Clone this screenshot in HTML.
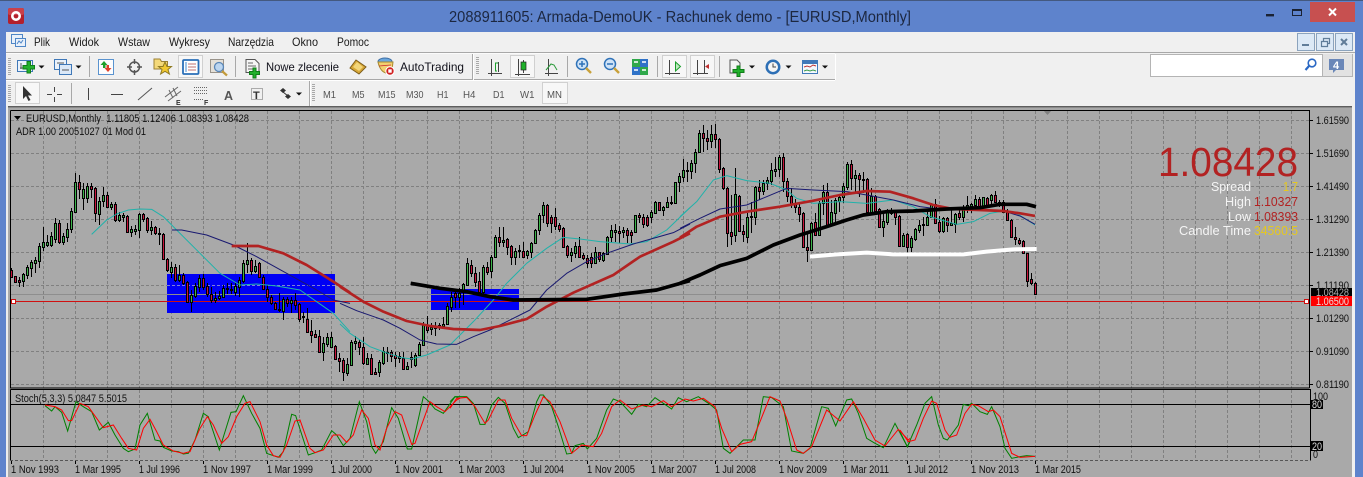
<!DOCTYPE html>
<html><head><meta charset="utf-8"><style>
html,body{margin:0;padding:0;width:1363px;height:477px;overflow:hidden;background:#a9a9a9}
svg{display:block}
text{font-family:"Liberation Sans",sans-serif;white-space:pre}
.m{font-size:12px;fill:#1a1a1a}
.p{font-size:10.500px;fill:#555}
.c{font-size:11px;fill:#111}
.a{font-size:11px;fill:#111}
.t{font-size:11px;fill:#111}
</style></head><body>
<svg id="s" width="1363" height="477" viewBox="0 0 1363 477" xmlns="http://www.w3.org/2000/svg">
<!-- window -->
<rect width="1363" height="477" fill="#5e83cc"/>
<rect width="1363" height="1" fill="#44597f"/>
<rect x="6" y="32" width="1349" height="445" fill="#f0f0f0"/>
<!-- app icon -->
<rect x="8" y="8" width="16" height="16" rx="2" fill="#b3202c"/>
<rect x="8" y="8" width="16" height="7" rx="2" fill="#c9404a"/>
<circle cx="16" cy="16" r="3.700" fill="none" stroke="#fff" stroke-width="2.600"/>
<text x="449" y="22" font-size="15.500" fill="#1c2740" textLength="462" lengthAdjust="spacingAndGlyphs">2088911605: Armada-DemoUK - Rachunek demo - [EURUSD,Monthly]</text>
<!-- window buttons -->
<rect x="1266" y="14" width="8" height="2.400" fill="#1a2233"/>
<rect x="1292.500" y="9.500" width="9" height="6" fill="none" stroke="#1a2233"/><rect x="1292" y="9" width="10" height="2" fill="#1a2233"/>
<rect x="1310" y="2" width="45" height="20" fill="#c75050"/>
<path d="M1329 8.500l7 7M1336 8.500l-7 7" stroke="#fff" stroke-width="2"/>
<!-- menu -->
<rect x="11.500" y="34.500" width="11" height="9" fill="#e8f0fa" stroke="#4f86c6"/>
<rect x="15.500" y="38.500" width="10" height="8" fill="#e8f0fa" stroke="#4f86c6"/>
<path d="M17 44l2-3 2 2 2-3" stroke="#4f86c6" fill="none"/>
<text class="m" x="34" y="46" textLength="16" lengthAdjust="spacingAndGlyphs">Plik</text>
<text class="m" x="69" y="46" textLength="30" lengthAdjust="spacingAndGlyphs">Widok</text>
<text class="m" x="118" y="46" textLength="32" lengthAdjust="spacingAndGlyphs">Wstaw</text>
<text class="m" x="169" y="46" textLength="41" lengthAdjust="spacingAndGlyphs">Wykresy</text>
<text class="m" x="228" y="46" textLength="46" lengthAdjust="spacingAndGlyphs">Narzędzia</text>
<text class="m" x="292" y="46" textLength="26" lengthAdjust="spacingAndGlyphs">Okno</text>
<text class="m" x="337" y="46" textLength="32" lengthAdjust="spacingAndGlyphs">Pomoc</text>
<!-- mdi buttons -->
<g fill="#dce9f6" stroke="#8ba3bd"><rect x="1297.500" y="33.500" width="17" height="17"/><rect x="1316.500" y="33.500" width="17" height="17"/><rect x="1335.500" y="33.500" width="17" height="17"/></g>
<rect x="1302" y="44" width="7" height="2" fill="#607d99"/>
<path d="M1321.500 41.500h6v5h-6zM1323.500 41v-2.500h6v5h-2" fill="none" stroke="#607d99" stroke-width="1.200"/>
<path d="M1341 39l6 6M1347 39l-6 6" stroke="#607d99" stroke-width="2"/>
<!-- toolbar lines -->
<rect x="6" y="52" width="1349" height="1" fill="#a8a8a8"/>
<rect x="6" y="53" width="829" height="1" fill="#fbfbfb"/>
<rect x="6" y="79" width="829" height="1" fill="#a8a8a8"/>
<rect x="6" y="80" width="829" height="1" fill="#fff"/>
<rect x="835" y="54" width="1" height="26" fill="#fff"/>
<rect x="472" y="54" width="1" height="26" fill="#a8a8a8"/>
<rect x="473" y="54" width="1" height="26" fill="#fff"/>
<g fill="#a8a8a8"><rect x="8" y="58" width="3" height="1"/><rect x="8" y="60" width="3" height="1"/><rect x="8" y="62" width="3" height="1"/><rect x="8" y="64" width="3" height="1"/><rect x="8" y="66" width="3" height="1"/><rect x="8" y="68" width="3" height="1"/><rect x="8" y="70" width="3" height="1"/><rect x="8" y="72" width="3" height="1"/><rect x="8" y="74" width="3" height="1"/>
<rect x="476" y="57" width="3" height="1"/><rect x="476" y="59" width="3" height="1"/><rect x="476" y="61" width="3" height="1"/><rect x="476" y="63" width="3" height="1"/><rect x="476" y="65" width="3" height="1"/><rect x="476" y="67" width="3" height="1"/><rect x="476" y="69" width="3" height="1"/><rect x="476" y="71" width="3" height="1"/><rect x="476" y="73" width="3" height="1"/>
<rect x="8" y="85" width="3" height="1"/><rect x="8" y="87" width="3" height="1"/><rect x="8" y="89" width="3" height="1"/><rect x="8" y="91" width="3" height="1"/><rect x="8" y="93" width="3" height="1"/><rect x="8" y="95" width="3" height="1"/><rect x="8" y="97" width="3" height="1"/><rect x="8" y="99" width="3" height="1"/><rect x="8" y="101" width="3" height="1"/>
<rect x="312" y="84" width="3" height="1"/><rect x="312" y="86" width="3" height="1"/><rect x="312" y="88" width="3" height="1"/><rect x="312" y="90" width="3" height="1"/><rect x="312" y="92" width="3" height="1"/><rect x="312" y="94" width="3" height="1"/><rect x="312" y="96" width="3" height="1"/><rect x="312" y="98" width="3" height="1"/><rect x="312" y="100" width="3" height="1"/>
<rect x="89" y="56" width="1" height="21"/><rect x="235" y="56" width="1" height="21"/><rect x="567" y="56" width="1" height="21"/><rect x="657" y="56" width="1" height="21"/><rect x="719" y="56" width="1" height="21"/>
<rect x="71" y="83" width="1" height="21"/><rect x="309" y="81" width="1" height="25"/></g>
<rect x="310" y="81" width="1" height="25" fill="#fff"/>
<!-- selected buttons -->
<g fill="#f7f7f7" stroke="#d0d0d0"><rect x="178.500" y="55.500" width="24" height="22"/><rect x="510.500" y="55.500" width="24" height="22"/><rect x="662.500" y="55.500" width="24" height="22"/><rect x="690.500" y="55.500" width="24" height="22"/><rect x="15.500" y="82.500" width="24" height="21"/><rect x="542.500" y="82.500" width="25" height="21"/></g>
<!-- tb1 icons -->
<rect x="17.500" y="60.500" width="15" height="11" fill="#eaf2fb" stroke="#3f78b8"/><path d="M21 63v6M20 68h9M24 66h4" stroke="#555" fill="none"/>
<path d="M27 61.500h3.500v4h4v3.500h-4v4H27v-4h-4v-3.500h4z" fill="#22b02c" stroke="#0f7d18"/>
<path d="M38.500 65.500h6l-3 3z" fill="#111"/>
<rect x="54.500" y="59.500" width="12" height="10" fill="#eaf2fb" stroke="#3f78b8"/><rect x="59.500" y="64.500" width="12" height="10" fill="#dbe8f7" stroke="#3f78b8"/><path d="M57 63h7M62 70h7" stroke="#555"/>
<path d="M75.500 65.500h6l-3 3z" fill="#111"/>
<rect x="98.500" y="59.500" width="15" height="15" fill="#fdfdfd" stroke="#5a93cf"/>
<path d="M104 61l-3.500 4H103v3h2.500v-3h2z" fill="#1fa02a"/><path d="M108 72l3.500-4H109v-3h-2.500v3h-2z" fill="#e0402a"/>
<circle cx="134.500" cy="67" r="5" fill="none" stroke="#555" stroke-width="1.500"/><path d="M134.500 59v5M134.500 70v5M127 67h5M137 67h5" stroke="#555" stroke-width="1.500"/>
<path d="M154 59h6l1.500 2.500h6V69h-13.500z" fill="#f4d97a" stroke="#9c8133"/>
<path d="M165 62l2 4.500h4.500l-3.500 3 1.400 4.500-4.400-2.700-4.400 2.700 1.400-4.500-3.500-3h4.500z" fill="#f2c830" stroke="#8f7a22"/>
<rect x="183" y="60" width="15.500" height="14" rx="1" fill="#fff" stroke="#2a6fb8" stroke-width="1.800"/><path d="M186 62v10" stroke="#7fb0e0" stroke-width="1.500"/><path d="M188 64h8M188 67h8M188 70h8" stroke="#c07070"/>
<rect x="210.500" y="59.500" width="13" height="13" fill="#e4e0d8" stroke="#99938a"/><circle cx="219" cy="67" r="4.500" fill="#bcd6f0" stroke="#5a87b8" stroke-width="1.300"/><path d="M222 71l5 4.500" stroke="#c29a3a" stroke-width="2.200"/>
<path d="M246 59.500h9l4 4v9h-13z" fill="#f5f5f5" stroke="#555"/><path d="M248 63h5M248 66h8M248 69h5" stroke="#666"/>
<path d="M253 68h3v3.500h3.500v3H256v3.500h-3v-3.500h-3.500v-3h3.500z" fill="#22b02c" stroke="#0f7d18"/>
<text x="266" y="71" font-size="12" fill="#10101a" textLength="73" lengthAdjust="spacingAndGlyphs">Nowe zlecenie</text>
<path d="M350 68l6-8 10 7-7 7z" fill="#d8a838" stroke="#7d5d1a"/><path d="M353 67l4-5 6 5-4 4z" fill="#f3d67a"/>
<ellipse cx="385" cy="61.500" rx="7" ry="3.500" fill="#6aa6dd" stroke="#3f6fa5"/>
<path d="M378 62c1 5 4 11 9 11s5-3 6-11z" fill="#f2d070" stroke="#a88a2f"/><path d="M379 66l12-1" stroke="#c33" stroke-width=".8"/>
<circle cx="390" cy="71" r="4.200" fill="#d02020" stroke="#fff"/><rect x="388.300" y="69.300" width="3.400" height="3.400" fill="#fff"/>
<text x="400" y="71" font-size="12" fill="#10101a" textLength="64" lengthAdjust="spacingAndGlyphs">AutoTrading</text>
<!-- chart type -->
<g fill="none" stroke="#444"><path d="M488 73.500h14M491.500 59v17"/></g><path d="M495.500 71v-8h2.500M495 71h2" stroke="#1a9e2a" fill="none"/><path d="M498.500 62v10" stroke="#444"/>
<g fill="none" stroke="#444"><path d="M515 74.500h15M518.500 59v17M523.500 60v13"/></g><rect x="521" y="62" width="5" height="8" fill="#1fb02a" stroke="#222" stroke-width=".7"/>
<path d="M545 73.500h13M548.500 59v17" stroke="#444" fill="none"/><path d="M546 70l5-6 3 1 3 5" stroke="#2a9a3a" fill="none"/>
<!-- zoom -->
<circle cx="582" cy="64" r="5.500" fill="#cfe3f7" stroke="#2f72b8" stroke-width="1.500"/><path d="M579 64h6M582 61v6" stroke="#2f72b8" stroke-width="1.500"/><path d="M586 68l5 5" stroke="#c9a13a" stroke-width="2.400"/>
<circle cx="610" cy="64" r="5.500" fill="#cfe3f7" stroke="#2f72b8" stroke-width="1.500"/><path d="M607 64h6" stroke="#2f72b8" stroke-width="1.500"/><path d="M614 68l5 5" stroke="#c9a13a" stroke-width="2.400"/>
<rect x="632" y="59" width="8" height="8" fill="#2fa84a"/><rect x="640" y="59" width="8" height="8" fill="#2f72c8"/><rect x="632" y="67" width="8" height="8" fill="#2f72c8"/><rect x="640" y="67" width="8" height="8" fill="#2fa84a"/>
<path d="M634 62h4M642 62h4M634 70h4M642 70h4" stroke="#fff" stroke-width="1.500"/>
<!-- scroll -->
<path d="M669.500 60v15M665 73.500h15" stroke="#444" fill="none"/><path d="M675.500 62l5 4.500-5 4.500z" fill="#bfe8c0" stroke="#1a9e2a"/>
<path d="M697.500 60v15M693 73.500h15M704.500 60v13" stroke="#444" fill="none"/><path d="M705 66.500l4-2.500v5z" fill="#c03030"/>
<!-- others -->
<path d="M730 60h7l3 3v10h-10z" fill="#f5f5f5" stroke="#555"/><path d="M737 66h3v3.500h4v3h-4v4h-3v-4h-4v-3h4z" fill="#22b02c" stroke="#0f7d18"/>
<path d="M749 65.500h6l-3 3z" fill="#111"/>
<circle cx="773" cy="67" r="7.500" fill="#2d6fb5"/><circle cx="773" cy="67" r="5" fill="#f4f4f4"/><path d="M773 63.500V67h3" stroke="#444" fill="none"/>
<path d="M785.500 65.500h6l-3 3z" fill="#111"/>
<rect x="802.500" y="60.500" width="15" height="13" fill="#f4f8fd" stroke="#3f78b8"/><rect x="803" y="61" width="14" height="3" fill="#3f78b8"/><path d="M804 67l3-1 3 1 3-2 3 1" stroke="#b33" fill="none"/><path d="M804 71l3-1 3 1 3-1 3 1" stroke="#3a9a4a" fill="none"/>
<path d="M822 65.500h6l-3 3z" fill="#111"/>
<!-- search -->
<rect x="1150.500" y="54.500" width="172" height="22" fill="#fff" stroke="#b4b4b4"/>
<circle cx="1312" cy="63" r="3.800" fill="none" stroke="#2a68c4" stroke-width="1.600"/><path d="M1309 66l-3.500 4" stroke="#2a68c4" stroke-width="2.200"/>
<rect x="1323" y="54" width="30" height="23" fill="#e2e2e2"/><rect x="1352" y="54" width="1" height="23" fill="#b4b4b4"/><rect x="1323" y="76" width="30" height="1" fill="#b4b4b4"/>
<path d="M1329 59h15v11h-8l-3 3v-3h-4z" fill="#6a87b8"/>
<text x="1333" y="69" font-size="11" font-weight="bold" fill="#fff">4</text>
<!-- tb2 icons -->
<path d="M23 86v13l3-3 2.500 5 2-1-2.500-4.500h4z" fill="#333"/>
<path d="M54.500 87v5M54.500 97v5M47 94.500h5M57 94.500h5" stroke="#444"/>
<path d="M88.500 88v12" stroke="#444"/>
<path d="M111 94.500h12" stroke="#444"/>
<path d="M138 100l14-12" stroke="#555"/>
<path d="M165 97l13-10M168 101l13-10M169 90l4 8M173 88l4 8" stroke="#666" fill="none"/>
<text x="176" y="105" font-size="7" font-weight="bold" fill="#333">E</text>
<path d="M194 87.500h13M194 90.500h13M194 93.500h13M194 99.500h10" stroke="#666" stroke-dasharray="1 1"/>
<text x="204" y="105" font-size="7" font-weight="bold" fill="#333">F</text>
<text x="224" y="100" font-size="12.500" font-weight="bold" fill="#555">A</text>
<rect x="251.500" y="88.500" width="11" height="11" fill="none" stroke="#666" stroke-dasharray="1 1"/>
<text x="253" y="99" font-size="11" font-weight="bold" fill="#333">T</text>
<path d="M283 88l-3 2.500 3 2.500 3-2.500zM288 94l-3 2.500 3 2.500 3-2.500z" fill="#333"/><path d="M283 92l5 4" stroke="#333"/>
<path d="M296 92.500h6l-3 3z" fill="#111"/>
<text class="p" x="323" y="98" textLength="13" lengthAdjust="spacingAndGlyphs">M1</text>
<text class="p" x="352" y="98" textLength="12.500" lengthAdjust="spacingAndGlyphs">M5</text>
<text class="p" x="378" y="98" textLength="17.500" lengthAdjust="spacingAndGlyphs">M15</text>
<text class="p" x="406" y="98" textLength="17.500" lengthAdjust="spacingAndGlyphs">M30</text>
<text class="p" x="437" y="98" textLength="11.500" lengthAdjust="spacingAndGlyphs">H1</text>
<text class="p" x="463" y="98" textLength="12.500" lengthAdjust="spacingAndGlyphs">H4</text>
<text class="p" x="493" y="98" textLength="11.500" lengthAdjust="spacingAndGlyphs">D1</text>
<text class="p" x="520" y="98" textLength="14.500" lengthAdjust="spacingAndGlyphs">W1</text>
<text class="p" x="547" y="98" textLength="15" lengthAdjust="spacingAndGlyphs">MN</text>
<!-- chart area -->
<rect x="6" y="106" width="1349" height="371" fill="#a9a9a9"/>
<rect x="6" y="106" width="1347" height="1" fill="#5e5e5e"/>
<rect x="6" y="107" width="1347" height="1" fill="#8a8a8a"/>
<rect x="6" y="106" width="2" height="371" fill="#ececec"/>
<rect x="1352" y="106" width="3" height="371" fill="#f0f0f0"/>
<g id="grid" shape-rendering="crispEdges"></g>
<rect x="167" y="274" width="168" height="39" fill="#0000f5"/>
<rect x="431" y="289" width="88" height="21" fill="#0000f5"/>
<path d="M167 285.500h168" stroke="#8080d8" stroke-dasharray="3 2" shape-rendering="crispEdges"/>
<path d="M11 294.500H1309" stroke="#8e8e8e" shape-rendering="crispEdges"/>
<path d="M11 301.500H1309" stroke="#d01010" shape-rendering="crispEdges"/>
<rect x="11.500" y="299.500" width="4" height="4" fill="#fff" stroke="#d01010" shape-rendering="crispEdges"/>
<rect x="1304.500" y="299.500" width="4" height="4" fill="#fff" stroke="#d01010" shape-rendering="crispEdges"/>
<path d="M1043 110h9l-4.500 5z" fill="#808080"/>
<g id="candles" shape-rendering="crispEdges"></g>
<!-- MAs -->
<g fill="none" stroke-linejoin="round">
<g stroke="#20b2aa" stroke-width="3">
<polyline transform="translate(0,120) scale(.33333)" points="275,343 320,300 350,282 385,270 420,267 455,268 490,290 530,330 600,400 660,460 720,495 770,492 830,498 900,510 950,545 1000,580 1050,635"/>
<polyline transform="translate(340,120) scale(.33333)" points="0,612 30,640 90,680 130,695 180,712 215,717 260,705 330,675 400,605 460,540 500,490 560,430 620,385 670,352 720,357 780,365 870,372 920,365 980,330 1050,263"/>
<polyline transform="translate(680,110) scale(.33333)" points="0,320 50,275 100,210 140,197 200,212 270,220 320,240 350,265 400,280 480,275 560,280 640,270 700,290 750,320 830,343 880,335 930,310 970,303 1010,310 1065,345"/>
</g>
<g stroke="#191970" stroke-width="3">
<polyline transform="translate(0,120) scale(.33333)" points="515,330 545,330 620,345 700,375 770,410 860,460 950,510 1000,540 1050,550"/>
<polyline transform="translate(340,120) scale(.33333)" points="0,550 50,572 130,600 180,625 240,660 290,672 350,673 400,650 450,630 520,595 570,570 620,510 680,460 740,425 800,400 880,372 950,352 1000,338 1050,312"/>
<polyline transform="translate(680,110) scale(.33333)" points="0,355 60,325 120,297 200,285 260,260 320,235 400,240 500,245 560,255 640,270 720,290 800,300 900,300 970,303 1020,318 1065,343"/>
</g>
<g stroke="#b22222" stroke-width="8">
<polyline transform="translate(0,120) scale(.33333)" points="695,378 775,378 850,400 920,435 1000,485 1050,518"/>
<polyline transform="translate(340,120) scale(.33333)" points="0,500 70,545 130,575 200,603 270,618 340,627 420,630 480,618 560,597 620,560 700,518 820,465 900,410 1000,365 1050,340"/>
<polyline transform="translate(680,110) scale(.33333)" points="0,383 50,350 120,320 200,305 300,290 400,272 480,255 560,243 630,245 700,265 760,285 820,297 900,300 970,303 1020,310 1065,318"/>
</g>
<g stroke="#000" stroke-width="11">
<polyline transform="translate(340,120) scale(.33333)" points="212,490 300,505 380,515 450,530 520,540 740,538 850,522 950,510 1050,482"/>
<polyline transform="translate(680,110) scale(.33333)" points="0,520 60,495 120,467 200,445 280,405 360,375 440,350 500,330 550,315 620,305 700,303 800,297 900,293 960,283 1040,283 1068,290"/>
</g>
<polyline stroke="#fff" stroke-width="12" transform="translate(680,110) scale(.33333)" points="390,440 470,433 560,428 640,433 850,433 920,425 1000,418 1070,417"/>
</g>
<!-- frames -->
<g shape-rendering="crispEdges" fill="none" stroke="#000">
<path d="M10.500 110.500H1309.500V388M10.500 110.500V388H1309.500"/>
<path d="M10.500 389.500H1310.500V460.500M10.500 389.500V460.500"/>
<path d="M10 460.500H1310" stroke="#555" stroke-dasharray="3 2"/>
<path d="M11 404.500H1310M11 446.500H1310"/>
<path d="M11.500 461v3M75.500 461v3M139.500 461v3M203.500 461v3M267.500 461v3M331.500 461v3M395.500 461v3M459.500 461v3M523.500 461v3M587.500 461v3M651.500 461v3M715.500 461v3M779.500 461v3M843.500 461v3M907.500 461v3M971.500 461v3M1035.500 461v3"/>
<path d="M1310 120.500h3M1310 153.500h3M1310 186.500h3M1310 219.500h3M1310 252.500h3M1310 285.500h3M1310 318.500h3M1310 351.500h3M1310 384.500h3"/>
</g>
<!-- stoch -->
<g fill="none" stroke-width="3">
<g stroke="#008000">
<polyline transform="translate(0,385) scale(.33333)" points="135,62 155,78 165,65 185,82 203,138 228,50 250,65 275,80 298,135 325,112 345,150 370,190 385,200 405,192 420,120 442,85 465,165 480,168 490,187 515,198 535,200 550,207 565,205 585,165 610,85 625,95 658,195 693,82 708,80 730,32 755,85 780,130 800,205 835,217 850,200 875,88 887,92 925,210 945,203 965,195 995,137 1010,150 1030,182 1050,160 1078,50 1100,110 1115,185 1127,205 1150,170 1175,68 1195,100 1222,192 1235,192 1270,35 1285,48 1305,72 1330,85 1365,35 1380,40"/>
<polyline transform="translate(450,385) scale(.33333)" points="0,50 15,35 50,35 70,55 90,118 105,118 125,60 145,37 165,55 190,130 205,158 235,140 260,50 270,30 280,30 305,65 325,125 350,207 365,205 375,182 400,175 412,192 440,160 470,75 490,42 510,50 545,88 565,58 590,65 615,38 640,55 665,72 685,38 710,50 745,35 780,58 800,75 820,190 840,205 880,165 915,165 940,35 965,38 1000,65 1025,198 1060,205 1080,190 1115,65 1135,70 1157,123 1190,45 1205,42 1225,85 1250,160 1275,175 1300,188 1335,115 1372,185 1380,170"/>
<polyline transform="translate(900,385) scale(.33333)" points="0,140 22,185 50,120 75,55 95,35 115,120 130,160 142,165 175,120 190,58 205,62 215,55 240,80 262,88 275,65 300,125 315,190 335,220 360,215 380,212 405,214"/>
</g>
<g stroke="#ff0000">
<polyline transform="translate(0,385) scale(.33333)" points="135,60 165,65 185,75 205,107 215,107 240,55 265,65 290,100 310,128 340,120 365,160 385,190 410,195 430,130 450,103 470,140 490,180 520,198 550,205 570,200 600,130 622,95 640,120 665,175 685,155 710,95 735,55 750,50 780,110 800,180 820,212 840,217 860,180 885,108 900,105 930,190 945,203 970,195 1000,150 1020,150 1040,172 1060,150 1085,75 1105,100 1125,180 1140,195 1160,130 1185,80 1205,90 1235,178 1245,175 1290,50 1310,65 1335,80 1350,65 1370,45 1380,40"/>
<polyline transform="translate(450,385) scale(.33333)" points="0,70 20,40 50,37 75,65 105,115 115,105 145,45 165,45 185,100 215,152 230,152 255,90 280,35 300,50 330,110 365,205 395,180 430,185 455,145 485,65 510,45 545,72 580,60 605,65 640,47 665,65 705,42 730,48 760,40 795,65 815,130 845,200 870,178 905,170 930,110 960,35 990,48 1010,100 1040,195 1060,205 1085,185 1130,75 1170,108 1210,50 1240,100 1275,165 1305,183 1345,133 1375,165 1380,160"/>
<polyline transform="translate(900,385) scale(.33333)" points="0,135 25,170 45,165 70,100 95,48 110,55 135,135 150,157 170,150 195,85 215,58 235,62 265,80 280,75 300,95 335,205 360,217 405,214"/>
</g>
</g>
<!-- chart texts -->
<path d="M14 116h7l-3.500 4z" fill="#000"/>
<text class="c" x="26" y="122" textLength="223" lengthAdjust="spacingAndGlyphs">EURUSD,Monthly  1.11805 1.12406 1.08393 1.08428</text>
<text class="c" x="16" y="135" textLength="130" lengthAdjust="spacingAndGlyphs">ADR 1.00 20051027 01 Mod 01</text>
<text class="c" x="15" y="402" textLength="112" lengthAdjust="spacingAndGlyphs">Stoch(5,3,3) 5.0847 5.5015</text>
<text x="1158" y="176" font-size="41" fill="#b22222" textLength="140" lengthAdjust="spacingAndGlyphs">1.08428</text>
<g font-size="13">
<text x="1211" y="191" fill="#f5f5f5" textLength="40" lengthAdjust="spacingAndGlyphs">Spread</text>
<text x="1283" y="191" fill="#e6c81e" textLength="15" lengthAdjust="spacingAndGlyphs">1.7</text>
<text x="1225" y="206" fill="#f5f5f5" textLength="26" lengthAdjust="spacingAndGlyphs">High</text>
<text x="1254" y="206" fill="#b22222" textLength="44" lengthAdjust="spacingAndGlyphs">1.10327</text>
<text x="1228" y="221" fill="#f5f5f5" textLength="23" lengthAdjust="spacingAndGlyphs">Low</text>
<text x="1254" y="221" fill="#b22222" textLength="44" lengthAdjust="spacingAndGlyphs">1.08393</text>
<text x="1179" y="235" fill="#f5f5f5" textLength="72" lengthAdjust="spacingAndGlyphs">Candle Time</text>
<text x="1254" y="235" fill="#e6c81e" textLength="44" lengthAdjust="spacingAndGlyphs">34560:5</text>
</g>
<!-- price axis -->
<text class="a" x="1316" y="124" textLength="33" lengthAdjust="spacingAndGlyphs">1.61590</text>
<text class="a" x="1316" y="157" textLength="33" lengthAdjust="spacingAndGlyphs">1.51690</text>
<text class="a" x="1316" y="190" textLength="33" lengthAdjust="spacingAndGlyphs">1.41490</text>
<text class="a" x="1316" y="223" textLength="33" lengthAdjust="spacingAndGlyphs">1.31290</text>
<text class="a" x="1316" y="256" textLength="33" lengthAdjust="spacingAndGlyphs">1.21390</text>
<text class="a" x="1316" y="289" textLength="33" lengthAdjust="spacingAndGlyphs">1.11190</text>
<text class="a" x="1316" y="322" textLength="33" lengthAdjust="spacingAndGlyphs">1.01290</text>
<text class="a" x="1316" y="355" textLength="33" lengthAdjust="spacingAndGlyphs">0.91090</text>
<text class="a" x="1316" y="388" textLength="33" lengthAdjust="spacingAndGlyphs">0.81190</text>
<rect x="1311" y="288" width="41" height="9" fill="#000"/>
<text x="1316" y="296" font-size="11" fill="#b0b0b0" textLength="33" lengthAdjust="spacingAndGlyphs">1.08428</text>
<rect x="1311" y="296" width="41" height="10" fill="#ff0000"/>
<text x="1316" y="305" font-size="11" fill="#f0d8d8" textLength="33" lengthAdjust="spacingAndGlyphs">1.06500</text>
<text class="a" x="1313" y="400" textLength="15" lengthAdjust="spacingAndGlyphs">100</text>
<rect x="1311" y="400" width="12" height="9" fill="#000"/><text x="1312" y="408" font-size="11" fill="#ddd" textLength="10" lengthAdjust="spacingAndGlyphs">80</text>
<rect x="1311" y="441" width="12" height="10" fill="#000"/><text x="1312" y="450" font-size="11" fill="#ddd" textLength="10" lengthAdjust="spacingAndGlyphs">20</text>
<text class="a" x="1313" y="458" textLength="5" lengthAdjust="spacingAndGlyphs">0</text>
<!-- time axis -->
<text class="t" x="11" y="473" textLength="48" lengthAdjust="spacingAndGlyphs">1 Nov 1993</text>
<text class="t" x="75" y="473" textLength="46" lengthAdjust="spacingAndGlyphs">1 Mar 1995</text>
<text class="t" x="139" y="473" textLength="41" lengthAdjust="spacingAndGlyphs">1 Jul 1996</text>
<text class="t" x="203" y="473" textLength="48" lengthAdjust="spacingAndGlyphs">1 Nov 1997</text>
<text class="t" x="267" y="473" textLength="46" lengthAdjust="spacingAndGlyphs">1 Mar 1999</text>
<text class="t" x="331" y="473" textLength="41" lengthAdjust="spacingAndGlyphs">1 Jul 2000</text>
<text class="t" x="395" y="473" textLength="48" lengthAdjust="spacingAndGlyphs">1 Nov 2001</text>
<text class="t" x="459" y="473" textLength="46" lengthAdjust="spacingAndGlyphs">1 Mar 2003</text>
<text class="t" x="523" y="473" textLength="41" lengthAdjust="spacingAndGlyphs">1 Jul 2004</text>
<text class="t" x="587" y="473" textLength="48" lengthAdjust="spacingAndGlyphs">1 Nov 2005</text>
<text class="t" x="651" y="473" textLength="46" lengthAdjust="spacingAndGlyphs">1 Mar 2007</text>
<text class="t" x="715" y="473" textLength="41" lengthAdjust="spacingAndGlyphs">1 Jul 2008</text>
<text class="t" x="779" y="473" textLength="48" lengthAdjust="spacingAndGlyphs">1 Nov 2009</text>
<text class="t" x="843" y="473" textLength="46" lengthAdjust="spacingAndGlyphs">1 Mar 2011</text>
<text class="t" x="907" y="473" textLength="41" lengthAdjust="spacingAndGlyphs">1 Jul 2012</text>
<text class="t" x="971" y="473" textLength="48" lengthAdjust="spacingAndGlyphs">1 Nov 2013</text>
<text class="t" x="1035" y="473" textLength="46" lengthAdjust="spacingAndGlyphs">1 Mar 2015</text>
</svg>
<script>
(function(){
var NS="http://www.w3.org/2000/svg";
function P(parent,d,stroke,w,dash){var e=document.createElementNS(NS,"path");e.setAttribute("d",d);e.setAttribute("stroke",stroke);e.setAttribute("stroke-width",w);e.setAttribute("fill","none");if(dash)e.setAttribute("stroke-dasharray",dash);parent.appendChild(e);}
var g=document.getElementById("grid"),d="",x;
for(x=43;x<1309;x+=32){d+="M"+(x+.5)+" 111V388M"+(x+.5)+" 390V460";}
[120,153,186,219,252,285,318,351,384].forEach(function(y){d+="M11 "+(y+.5)+"H1309";});
P(g,d,"#808080",1,"3 2");
var A="450 470 445 475 r,468 485 468 485 r,481 485 470 500 r,462 482 460 500 g,442 465 435 478 g,427 443 420 470 g,420 428 412 460 g,378 422 370 445 g,367 380 322 392 g,366 374 345 380 g,348 375 335 380 g,310 356 295 370 g,310 366 300 372 r,348 365 340 375 g,328 350 310 365 g,273 328 265 340 g,186 275 160 280 g,186 206 165 236 r,207 233 190 270 g,198 233 190 250 g,198 206 190 235 r,205 280 200 305 r,243 282 230 315 g,226 243 200 260 g,226 262 215 265 r,252 262 245 270 g,252 300 245 305 r,285 300 275 305 g,285 290 278 305 g,289 335 285 340 r,327 335 318 350 g,326 333 315 345 g,282 330 278 355 g,283 296 278 305 r,295 330 290 340 r,322 330 302 345 g,322 340 318 345 r,340 343 325 375 g,342 416 338 420 r,418 450 415 455 r,442 456 425 475 g,442 480 432 485 r,464 480 435 485 g,464 488 460 495 r,487 545 483 548 r,526 545 510 575 g,499 528 490 535 g,474 500 465 515 g,474 500 462 510 r,499 522 490 530 r,521 540 500 550 r,533 541 515 548 g,527 533 512 540 g,504 530 495 535 g,505 507 490 522 g,508 511 490 522 r,498 515 490 528 g,480 500 470 530 g,430 482 420 490 g,420 433 370 460 g,420 452 415 465 r,438 453 420 460 g,428 472 425 475 r,472 506 465 510 r,508 530 495 545 r,532 550 525 555 r,550 566 545 570 r,566 570 520 575 r,538 572 530 600 g,538 550 530 560 r,541 550 530 580 g,541 555 520 570 r,552 598 548 605 r,588 590 575 610 g,598 635 565 640 r,634 644 600 668 r,643 650 630 655 r,649 695 630 700 r,670 695 650 722 g,652 672 640 680 g,652 680 635 682 g,678 716 675 720 r,715 722 700 755 r,720 755 715 782 r,733 758 715 768 g,";
var B="665 735 660 738 g,664 670 648 690 g,666 682 660 705 r,682 730 650 735 r,714 732 700 735 g,714 762 703 765 r,755 762 745 765 r,727 755 720 770 g,694 730 680 735 g,695 698 680 725 g,695 708 690 725 r,706 714 695 740 r,708 715 695 730 r,715 748 695 750 r,737 746 725 750 g,710 717 695 745 r,705 735 698 740 g,672 705 665 708 g,615 675 605 678 g,615 630 588 640 r,622 628 610 645 g,620 625 605 648 g,615 622 608 630 g,612 618 590 628 g,558 612 550 615 g,532 560 515 575 g,518 530 510 565 r,518 530 505 565 g,492 515 490 555 g,430 495 415 497 g,435 460 420 470 r,458 485 440 500 r,483 515 455 522 r,440 515 435 525 g,442 455 425 465 r,410 452 405 475 g,350 410 345 412 g,350 365 320 380 r,360 365 320 380 g,358 380 355 405 r,378 412 375 435 r,392 412 385 435 g,390 392 375 415 r,392 410 365 415 r,394 405 390 418 g,368 395 365 415 g,330 368 328 370 g,285 330 280 345 g,255 285 245 310 g,255 310 253 320 r,292 310 285 340 r,292 318 265 330 r,316 326 310 335 r,325 380 320 382 r,379 405 375 415 r,396 404 385 425 g,378 398 365 415 g,378 412 350 415 r,404 414 400 420 r,414 430 405 445 r,412 428 400 445 r,397 428 380 432 g,397 418 395 425 r,400 420 395 425 g,350 402 348 405 g,330 350 315 370 g,330 335 312 365 g,333 338 318 370 r,331 337 320 355 g,331 345 325 370 r,335 345 330 370 r,286 335 285 338 g,286 292 278 310 r,290 312 283 325 r,290 314 285 320 r,276 290 270 310 g,247 278 243 280 g,247 270 245 272 r,260 270 258 288 g,247 262 230 265 g,247 250 228 255 r,186 250 185 252 g,168 186 160 215 g,150 170 118 185 g,150 154 125 185 r";
var C="160 182 150 208 g,127 160 118 190 g,70 127 60 130 g,70 85 45 125 r,85 92 60 120 r,72 92 45 115 g,72 88 42 115 r,88 176 85 190 r,175 235 170 240 r,235 368 230 410 r,367 377 255 405 r,253 375 175 395 g,259 362 255 365 r,364 373 345 395 r,320 380 310 398 g,318 320 275 368 g,232 320 228 345 g,232 243 210 270 r,218 243 210 255 g,210 218 200 240 g,180 212 160 225 g,176 182 140 200 g,142 176 135 200 g,142 212 130 245 r,212 258 205 275 r,257 282 235 295 r,280 292 268 310 r,292 312 275 335 r,310 412 305 415 r,412 420 365 455 r,340 420 335 422 g,337 375 310 378 r,278 374 272 378 g,247 280 225 315 g,247 345 218 350 r,307 345 270 348 g,270 308 265 335 g,260 272 255 305 g,228 262 218 280 g,162 230 155 240 g,162 204 150 240 r,196 204 180 245 g,196 208 188 260 r,206 209 185 250 g,208 306 205 310 r,258 306 235 310 g,258 302 255 305 r,298 350 295 355 r,333 350 305 380 g,305 335 298 345 g,305 308 295 315 g,306 320 300 345 r,318 407 315 410 r,374 407 370 412 g,372 412 370 438 r,383 412 378 425 g,358 388 355 392 g,345 360 330 370 g,342 346 320 378 g,320 345 300 345 g,283 322 280 325 g,283 340 268 342 r,337 362 318 368 r,324 362 320 368 g,324 345 320 365 r,340 344 300 345 g,313 342 310 368 g,310 320 295 330 r,292 322 285 335 g,286 292 258 310 g,283 287 280 310 g,267 285 255 295 g,267 292 262 298 r,262 292 262 295 g,264 290 262 295 r,256 270 252 285 g,256 275 242 280 r,275 280 270 290 g,275 305 270 308 r,305 330 298 330 r,330 382 328 385 r,380 388 350 405 r,390 398 385 405 r,394 430 390 432 r,430 512 428 530 r,508 520 490 525 r,520 553 515 555 r";
var all=(A+B).split(",").map(function(s){return [s,120];}).concat(C.split(",").map(function(s){return [s,110];}));
var w="",bk="",gr="",rd="";
all.forEach(function(it,n){
 var v=it[0].trim().split(" ");var y0=it[1];
 var t=Math.round(y0+ +v[0]/3),b=Math.round(y0+ +v[1]/3),h=Math.round(y0+ +v[2]/3),l=Math.round(y0+ +v[3]/3);
 var cx=11+4*n;
 if(b<=t)b=t+1;
 w+="M"+(cx+.5)+" "+h+"V"+l;
 bk+="M"+(cx+.5)+" "+t+"V"+(b+1);
 if(b-t>=2){var s="M"+(cx+.5)+" "+(t+1)+"V"+b;if(v[4]=="g")gr+=s;else rd+=s;}
});
var c=document.getElementById("candles");
P(c,w,"#000",1);P(c,bk,"#000",3);P(c,gr,"#3cb44a",1);P(c,rd,"#c8143c",1);
})();
</script>
</body></html>
